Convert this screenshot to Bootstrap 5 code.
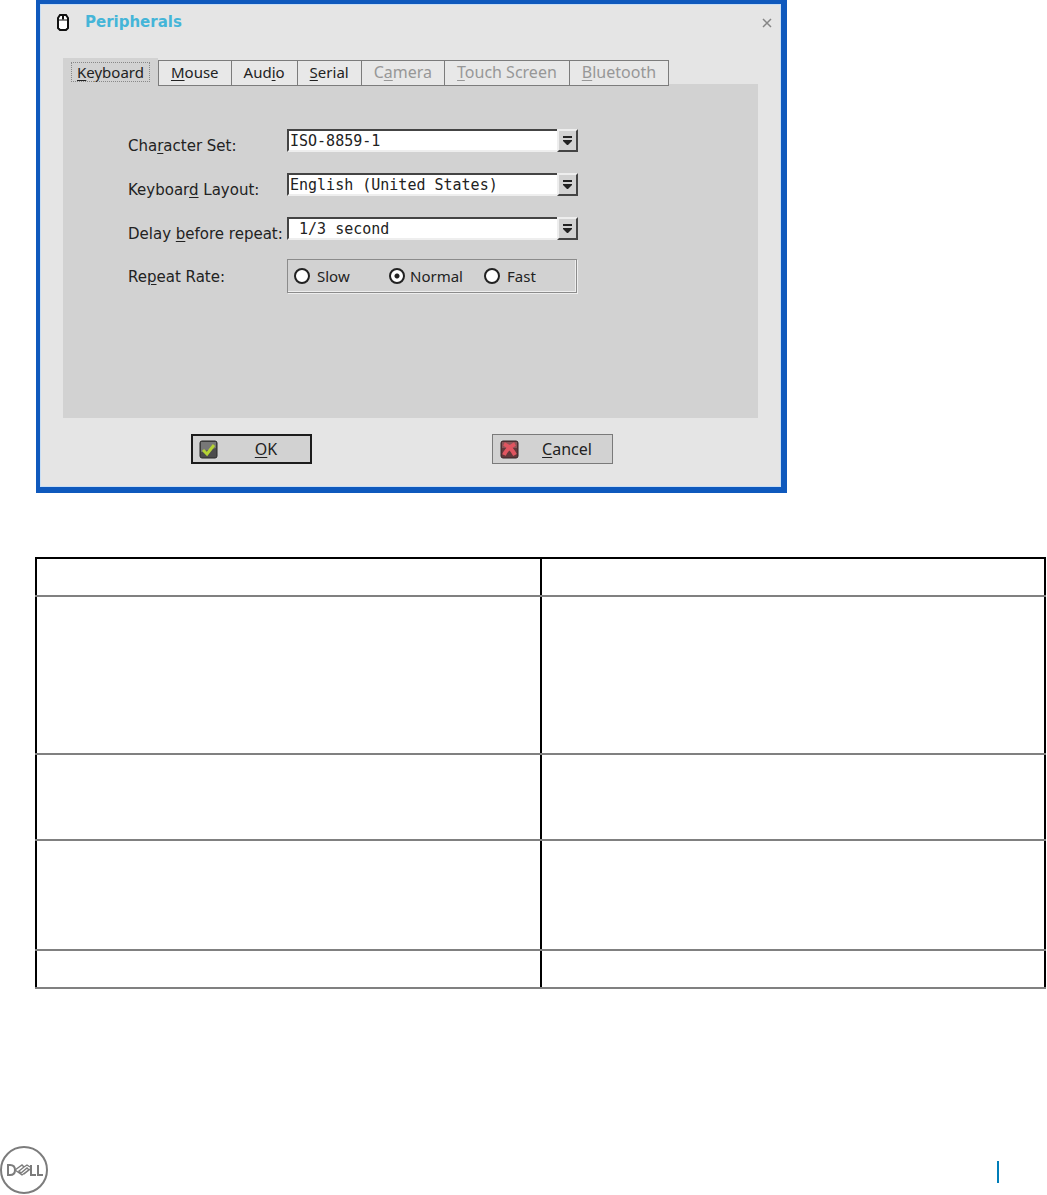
<!DOCTYPE html>
<html lang="en">
<head>
<meta charset="utf-8">
<meta name="viewport" content="width=device-width, initial-scale=1">
<title>Peripherals</title>
<link href="https://cdn.jsdelivr.net/npm/bootstrap@5.3.0/dist/css/bootstrap.min.css" rel="stylesheet">
<style>
  body { font-family: "Noto Sans", sans-serif; font-size: 15px; line-height: 20px; color: #222; background: #fff; }
  .sheet { padding: 0 1px 0 35px; }
  .dialog { max-width: 751px; margin-left: 1px; background: #e5e5e5; border: 4px solid #0f59bd; border-width: 4px 6px 6px 4px; box-shadow: inset 0 0 0 1px #c8def5; padding: 8px 23px 23px; }
  .titlebar { height: 20px; margin-bottom: 26px; }
  .titlebar h1 { font: bold 15px/20px "DejaVu Sans", sans-serif; color: #45b5d8; margin: 0 0 0 15px; }
  .titlebar .mouse-icon { margin-left: -7px; }
  .close-x { border: 0; background: none; padding: 0; line-height: 0; margin: 2px -14px 0 0; }
  .tabstrip { position: relative; z-index: 1; margin-bottom: -2px; }
  .tabstrip button { border: 1px solid #7c7c7c; background: #e8e8e8; color: #222; height: 26px; padding: 0 12px 2px; line-height: 22px; margin-top: 2px; margin-right: -1px; white-space: nowrap; }
  .tabstrip button:disabled { color: #979797; font-size: 16px; }
  .tabstrip button.current { border: 0; background: #d2d2d2; height: 28px; margin: 0; padding: 5px 9px 5px; }
  .current span { display: block; line-height: 18px; padding: 0 5px; outline: 1px dotted #888; }
  .pane { background: #d2d2d2; min-height: 334px; padding: 45px 65px 0; }
  .field { min-height: 44px; }
  .field > label, .field > .caption { flex: 0 0 159px; padding-top: 7px; white-space: nowrap; font-family: "DejaVu Sans", sans-serif; }
  .field-rate { margin-top: -2px; min-height: 34px; }
  .field-rate > .caption { padding-top: 2px; }
  .combo { position: relative; flex: 0 1 291px; height: 23px; }
  .combo select { appearance: none; width: 100%; height: 23px; border: 2px solid #444; border-color: #444 #eee #eee #444; border-radius: 0; background: #fff; color: #222; padding: 1px 24px 0 1px; font: 15px/18px "DejaVu Sans Mono", monospace; }
  .combo .drop { position: absolute; right: 0; top: 0; width: 21px; height: 23px; background: #d2d2d2; border: 2px solid #444; border-color: #eee #444 #444 #eee; pointer-events: none; display: flex; align-items: center; justify-content: center; }
  .rates { flex: 0 1 290px; height: 34px; border: 1px solid #8b8b8b; box-shadow: inset -1px -1px #eee, 1px 1px #eee; padding-left: 6px; }
  .rates label { flex: 0 0 95px; display: flex; align-items: center; gap: 7px; }
  .rates label:last-child { flex-basis: auto; }
  .rates label.tight { gap: 5px; }
  .rates input { appearance: none; width: 16px; height: 16px; margin: 0; border: 2px solid #222; border-radius: 50%; background: #fff; }
  .rates input:checked { background: radial-gradient(circle, #222 0 2px, #fff 3px); }
  .actions { gap: 180px; padding: 16px 18px 0 0; }
  .actions button { width: 121px; height: 30px; background: #d2d2d2; border: 1px solid #7a7a7a; color: #222; font-size: 16px; padding: 0 8px 0 7px; display: flex; align-items: center; }
  .actions button.primary-key { border: 2px solid #1c1c1c; padding: 0 7px 0 6px; }
  .actions span { flex: 1; text-align: center; padding-left: 12px; }
  u { text-underline-offset: 2px; text-decoration-thickness: 1px; }
  .spec { width: 100%; margin: 64px 0 0; border-collapse: collapse; table-layout: fixed; border: 2px solid #000; border-bottom-color: #808080; }
  .spec th, .spec td { padding: 0; border-left: 2px solid #000; border-right: 2px solid #000; border-bottom: 2px solid #808080; }
  .h-slim { height: 38px; } .h-tall { height: 158px; } .h-mid { height: 86px; } .h-wide { height: 110px; }
  footer { margin-top: 156px; padding-right: 48px; }
  footer .rule { width: 2px; height: 22px; background: #007db8; margin-top: 3px; }
</style>
<script src="https://cdn.jsdelivr.net/npm/bootstrap@5.3.0/dist/js/bootstrap.bundle.min.js"></script>
</head>
<body>
<main class="sheet">
  <section class="dialog">
    <header class="titlebar d-flex align-items-center">
      <svg class="mouse-icon" width="14" height="20" viewBox="0 0 14 20" fill="none" stroke="#111" stroke-width="2" aria-hidden="true"><path d="M2 9V6l2-3h6l2 3v10l-2 2H4l-2-2z" fill="#fff"/><path d="M2 8h10M7 3v5" stroke-width="1"/><path d="M7 4v3"/></svg>
      <h1>Peripherals</h1>
      <button type="button" class="close-x ms-auto" aria-label="Close"><svg width="10" height="10" viewBox="0 0 10 10" stroke="#858585" stroke-width="1.5"><path d="M1 1l8 8M9 1L1 9"/></svg></button>
    </header>
    <div class="tabstrip d-flex" role="tablist">
      <button type="button" role="tab" aria-selected="true" class="current"><span><u>K</u>eyboard</span></button>
      <button type="button" role="tab"><u>M</u>ouse</button>
      <button type="button" role="tab">Aud<u>i</u>o</button>
      <button type="button" role="tab"><u>S</u>erial</button>
      <button type="button" role="tab" disabled>C<u>a</u>mera</button>
      <button type="button" role="tab" disabled><u>T</u>ouch Screen</button>
      <button type="button" role="tab" disabled><u>B</u>luetooth</button>
    </div>
    <div class="pane" role="tabpanel">
      <div class="field d-flex align-items-start">
        <label for="charset">Cha<u>r</u>acter Set:</label>
        <div class="combo"><select id="charset"><option>ISO-8859-1</option></select><span class="drop"><svg width="11" height="10" viewBox="0 0 11 10" fill="#222"><path d="M1 0h9v2H1zM1 4h9v1L6 9H5L1 5z"/></svg></span></div>
      </div>
      <div class="field d-flex align-items-start">
        <label for="layout">Keyboar<u>d</u> Layout:</label>
        <div class="combo"><select id="layout"><option>English (United States)</option></select><span class="drop"><svg width="11" height="10" viewBox="0 0 11 10" fill="#222"><path d="M1 0h9v2H1zM1 4h9v1L6 9H5L1 5z"/></svg></span></div>
      </div>
      <div class="field d-flex align-items-start">
        <label for="delay">Delay <u>b</u>efore repeat:</label>
        <div class="combo"><select id="delay"><option>&nbsp;1/3 second</option></select><span class="drop"><svg width="11" height="10" viewBox="0 0 11 10" fill="#222"><path d="M1 0h9v2H1zM1 4h9v1L6 9H5L1 5z"/></svg></span></div>
      </div>
      <div class="field field-rate d-flex align-items-center" role="radiogroup" aria-labelledby="rate">
        <span class="caption" id="rate">Re<u>p</u>eat Rate:</span>
        <div class="rates d-flex align-items-center">
          <label><input type="radio" name="rate">Slow</label>
          <label class="tight"><input type="radio" name="rate" checked>Normal</label>
          <label><input type="radio" name="rate">Fast</label>
        </div>
      </div>
    </div>
    <div class="actions d-flex justify-content-center">
      <button type="button" class="primary-key">
        <svg width="19" height="19" viewBox="0 0 19 19" aria-hidden="true"><rect x="1" y="1" width="17" height="17" rx="2" fill="#4c4c4c" stroke="#292929"/><path d="M2 2h15v6L2 12z" fill="#777"/><path d="M4 10l4 4 7-9" fill="none" stroke="#b5d335" stroke-width="3"/></svg>
        <span><u>O</u>K</span>
      </button>
      <button type="button">
        <svg width="19" height="19" viewBox="0 0 19 19" aria-hidden="true"><rect x="1" y="1" width="17" height="17" rx="2" fill="#64383b" stroke="#352526"/><path d="M2 2h15v6H2z" fill="#8b5457"/><path d="M4 4q7 3 11 11M15 4Q7 8 4 15" fill="none" stroke="#e05560" stroke-width="4"/></svg>
        <span><u>C</u>ancel</span>
      </button>
    </div>
  </section>
  <table class="spec">
    <tbody>
      <tr class="h-slim"><th></th><th></th></tr>
      <tr class="h-tall"><td></td><td></td></tr>
      <tr class="h-mid"><td></td><td></td></tr>
      <tr class="h-wide"><td></td><td></td></tr>
      <tr class="h-slim"><td></td><td></td></tr>
    </tbody>
  </table>
</main>
<footer class="d-flex justify-content-between align-items-center">
  <svg width="48" height="50" viewBox="0 0 48 50" fill="none" stroke="#7c7c7c" role="img" aria-label="Dell"><circle cx="24" cy="25" r="23" stroke-width="2"/><path d="M8 20v10h2q5 0 5-5t-5-5zM31 20v10h5M38 20v10h5" stroke-width="2"/><path d="M15 25l7-5 2 2-5 4 2 2 6-5 2 2-5 4M15 25l7 5 8-6M24 22l3-2 3 2" stroke-width="1.4"/></svg>
  <span class="rule"></span>
</footer>
</body>
</html>
